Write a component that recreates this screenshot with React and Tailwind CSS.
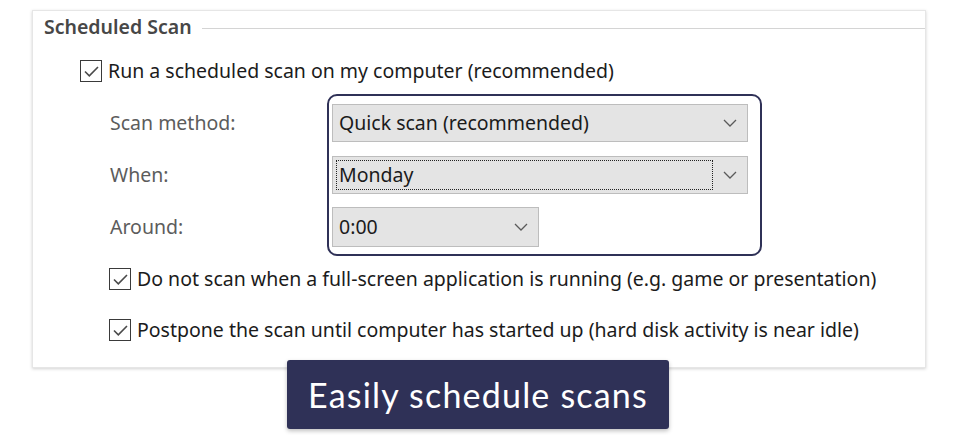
import React from 'react';

const ui = { fontFamily: '"Noto Sans", "Open Sans", sans-serif' };

const CheckBox = () => (
  <span className="w-[22px] h-[22px] border-[1.5px] border-[#3a3a3a] bg-white flex items-center justify-center shrink-0">
    <svg width="17" height="17" viewBox="0 0 17 17" fill="none">
      <path d="M2 8.5 L6.3 12.8 L15 4" stroke="#4a4a4a" strokeWidth="1.6" />
    </svg>
  </span>
);

const Chevron = () => (
  <svg width="14" height="8" viewBox="0 0 14 8" fill="none">
    <path d="M1 1 L7 7 L13 1" stroke="#5a5a5a" strokeWidth="1.3" />
  </svg>
);

const Dropdown = ({ value, width, focused }) => (
  <div className={`h-[38px] ${width} bg-[#e4e4e4] border border-[#bdbdbd] flex items-center`}>
    {focused ? (
      <div className="flex-1 h-[30px] ml-[3px] border border-dotted border-[#222] flex items-center pl-[2px]">
        <span className="text-[19.5px] text-[#1b1b1b]">{value}</span>
      </div>
    ) : (
      <span className="flex-1 pl-[6px] text-[19.5px] text-[#1b1b1b]">{value}</span>
    )}
    <span className="w-[34px] flex justify-center">
      <Chevron />
    </span>
  </div>
);

export default function App() {
  return (
    <div className="w-[956px] h-[435px] bg-white flex flex-col" style={ui}>
      {/* Card */}
      <div className="ml-[32px] mt-[10px] w-[894px] h-[358px] bg-white border border-[#e6e6e6] shadow-[0_1px_3px_rgba(0,0,0,0.18)] flex flex-col">
        {/* Group box header */}
        <div className="h-[32px] flex items-center">
          <span className="pl-[11px] pr-[10px] text-[19.5px] font-semibold text-[#474747]">Scheduled Scan</span>
          <div className="flex-1 h-px bg-[#d4d4d4] mt-[2px]" />
        </div>

        {/* Main checkbox */}
        <div className="mt-[17px] ml-[47px] flex items-center gap-[6px] h-[22px]">
          <CheckBox />
          <span className="text-[19.5px] text-[#1b1b1b]">Run a scheduled scan on my computer (recommended)</span>
        </div>

        {/* Options */}
        <div className="mt-[12px] flex">
          <div className="ml-[77px] w-[217px] pt-[10px] flex flex-col text-[19.5px] text-[#5c5c5c]">
            <div className="h-[38px] flex items-center">Scan method:</div>
            <div className="h-[38px] mt-[14px] flex items-center">When:</div>
            <div className="h-[40px] mt-[13px] flex items-center">Around:</div>
          </div>
          <div className="w-[435px] h-[162px] border-2 border-[#2f3157] rounded-[10px] pt-[8px] pl-[3px] flex flex-col">
            <Dropdown value="Quick scan (recommended)" width="w-[416px]" />
            <div className="mt-[14px]">
              <Dropdown value="Monday" width="w-[416px]" focused />
            </div>
            <div className="mt-[13px]">
              <div className="h-[40px] w-[207px] bg-[#e4e4e4] border border-[#bdbdbd] flex items-center">
                <span className="flex-1 pl-[6px] text-[19.5px] text-[#1b1b1b]">0:00</span>
                <span className="w-[34px] flex justify-center">
                  <Chevron />
                </span>
              </div>
            </div>
          </div>
        </div>

        {/* Sub options */}
        <div className="mt-[12px] ml-[76px] flex items-center gap-[6px] h-[22px]">
          <CheckBox />
          <span className="text-[19.5px] text-[#1b1b1b]">Do not scan when a full-screen application is running (e.g. game or presentation)</span>
        </div>
        <div className="mt-[29px] ml-[76px] flex items-center gap-[6px] h-[22px]">
          <CheckBox />
          <span className="text-[19.5px] text-[#1b1b1b]">Postpone the scan until computer has started up (hard disk activity is near idle)</span>
        </div>
      </div>

      {/* Caption */}
      <div className="-mt-[8px] mx-auto w-[382px] h-[69px] bg-[#2f3157] rounded-[3px] shadow-[0_2px_4px_rgba(0,0,0,0.25)] flex items-center justify-center">
        <span className="text-white text-[34px] tracking-[1.2px]" style={{ fontFamily: 'Lato, "Noto Sans", sans-serif' }}>Easily schedule scans</span>
      </div>
    </div>
  );
}
